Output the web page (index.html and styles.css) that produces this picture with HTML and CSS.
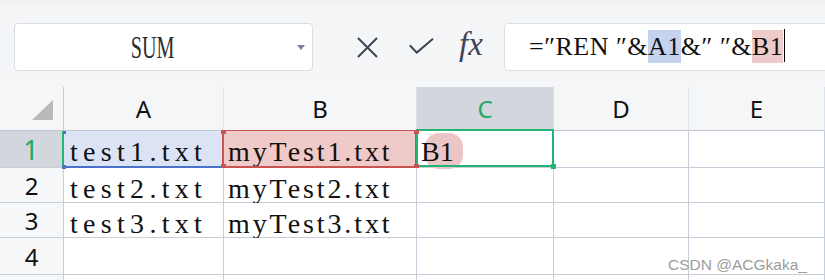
FILE: index.html
```html
<!DOCTYPE html>
<html>
<head>
<meta charset="utf-8">
<link rel="stylesheet" href="styles.css">
</head>
<body>
<div class="app">
  <div class="toolbar">
    <div class="namebox">
      <span class="name"><span class="name-t">SUM</span></span>
      <span class="dd"></span>
    </div>
    <span class="tb-icon ic-x">
      <svg width="21" height="21" viewBox="0 0 21 21"><path d="M1 1 L20 20 M20 1 L1 20" stroke="#3d4454" stroke-width="2" fill="none"/></svg>
    </span>
    <span class="tb-icon ic-ok">
      <svg width="25" height="16" viewBox="0 0 25 16"><path d="M0.8 7.2 L7.8 14.6 L24 0.8" stroke="#3d4454" stroke-width="2" fill="none"/></svg>
    </span>
    <span class="fx">fx</span>
    <div class="formula">=″REN ″&amp;<span class="ref ref-a">A1</span>&amp;″ ″&amp;<span class="ref ref-b">B1</span><span class="caret"></span></div>
  </div>

  <div class="sheet">
    <div class="c hd corner"><svg width="21" height="20" viewBox="0 0 21 20"><polygon points="21,0 21,20 0,20" fill="#b9b9b9"/></svg></div>
    <div class="c hd col">A</div>
    <div class="c hd col">B</div>
    <div class="c hd col col-on">C</div>
    <div class="c hd col">D</div>
    <div class="c hd col">E</div>

    <div class="c rh rh-on">1</div>
    <div class="c cell ta sel-a">test1.txt</div>
    <div class="c cell tb sel-b">myTest1.txt</div>
    <div class="c cell sel-c"><span class="pill">B1</span></div>
    <div class="c cell"></div>
    <div class="c cell"></div>

    <div class="c rh">2</div>
    <div class="c cell ta">test2.txt</div>
    <div class="c cell tb">myTest2.txt</div>
    <div class="c cell"></div>
    <div class="c cell"></div>
    <div class="c cell"></div>

    <div class="c rh">3</div>
    <div class="c cell ta">test3.txt</div>
    <div class="c cell tb">myTest3.txt</div>
    <div class="c cell"></div>
    <div class="c cell"></div>
    <div class="c cell"></div>

    <div class="c rh">4</div>
    <div class="c cell"></div>
    <div class="c cell"></div>
    <div class="c cell"></div>
    <div class="c cell"></div>
    <div class="c cell"></div>

    <div class="c rh"></div>
    <div class="c cell"></div>
    <div class="c cell"></div>
    <div class="c cell"></div>
    <div class="c cell"></div>
    <div class="c cell"></div>
  </div>

  <div class="wm">CSDN @ACGkaka_</div>
</div>
</body>
</html>
```
FILE: styles.css
```css
* { box-sizing: border-box; }
html, body { margin: 0; padding: 0; }
body { width: 825px; height: 280px; overflow: hidden; background: #fff; }

.app { position: relative; width: 825px; height: 280px; overflow: hidden; }

.toolbar {
  height: 87px;
  padding-top: 23px;
  display: flex;
  align-items: flex-start;
  background: linear-gradient(#eeeff1 0, #f4f5f7 5px, #f5f6f8 100%);
}

.namebox {
  margin-left: 14px;
  width: 299px;
  height: 48px;
  border: 1px solid #d9dce1;
  border-radius: 4px;
  background: #fff;
  display: flex;
}
.name {
  flex: 1;
  text-align: center;
  font-family: "Liberation Serif", serif;
  font-size: 32px;
  line-height: 46px;
  color: #2e2e2e;
}
.name-t { display: inline-block; transform: scaleX(0.63); }
.dd {
  width: 22px;
  display: flex;
  align-items: center;
  justify-content: center;
}
.dd::before {
  content: "";
  border-left: 4.5px solid transparent;
  border-right: 4.5px solid transparent;
  border-top: 5px solid #7b8295;
  margin-top: 1px;
}

.tb-icon { display: block; }
.tb-icon svg { display: block; }
.ic-x { margin-left: 44px; margin-top: 14px; }
.ic-ok { margin-left: 31px; margin-top: 15px; }
.fx {
  margin-left: 21px;
  width: 32px;
  text-align: center;
  font-family: "Liberation Serif", serif;
  font-style: italic;
  font-size: 33px;
  line-height: 48px;
  margin-top: -3px;
  color: #3d4454;
}

.formula {
  flex: 1;
  margin-left: 17px;
  margin-right: -6px;
  height: 48px;
  border: 1px solid #dcdfe4;
  border-radius: 4px;
  background: #fff;
  padding-left: 24px;
  font-family: "Liberation Serif", serif;
  font-size: 26px;
  line-height: 46px;
  letter-spacing: 0.5px;
  color: #111;
  white-space: nowrap;
}
.ref { padding: 2px 0; }
.ref-a { background: #c6d3ef; }
.ref-b { background: #eecaca; }
.caret {
  display: inline-block;
  width: 1px;
  height: 33px;
  background: #000;
  vertical-align: -7px;
  margin-left: 1px;
}

.sheet {
  height: 193px;
  overflow: hidden;
  display: grid;
  grid-template-columns: 64px 160px 193px 137px 135px 1fr;
  grid-template-rows: 44px 37px 35px 35px 37px 40px;
}
.c {
  border-right: 1px solid #c8cdd9;
  border-bottom: 1px solid #c8cdd9;
  background: #fff;
}
.hd {
  background: #f5f6f8;
  border-right-color: #dfe2e8;
  border-bottom-color: #bfc5d2;
  font-family: "Noto Sans", sans-serif;
  font-size: 24px;
  line-height: 43px;
  text-align: center;
  color: #111;
}
.corner {
  display: flex;
  justify-content: flex-end;
  align-items: flex-end;
  padding: 0 10px 10px 0;
  border-right-color: #c8cdd9;
}
.corner svg { display: block; }
.col-on { background: #d3d6dd; color: #22a867; }

.rh {
  background: #f6f7f9;
  font-family: "Noto Sans", sans-serif;
  font-size: 24px;
  text-align: center;
  color: #111;
  display: flex;
  align-items: center;
  justify-content: center;
}
.rh-on {
  background: #d3d6dd;
  color: #22a867;
  font-size: 27px;
  border-right: 2px solid #22b573;
}

.cell {
  font-family: "Liberation Serif", "Times New Roman", serif;
  font-size: 28px;
  line-height: 28px;
  padding: 7px 0 0 5px;
  color: #111;
  white-space: nowrap;
}
.ta { letter-spacing: 5.3px; padding-left: 6px; }
.tb { letter-spacing: 2.9px; padding-left: 4px; }

.sel-a {
  position: relative;
  background: #dce3f5;
  border-bottom-color: #4a73c8;
  box-shadow: inset 0 -1px 0 #4a73c8;
}
.sel-a::before {
  content: "";
  position: absolute;
  left: -2px;
  bottom: -2px;
  width: 4px;
  height: 4px;
  background: #4a73c8;
}
.sel-a::after {
  content: "";
  position: absolute;
  left: -1px;
  top: 0;
  width: 3px;
  height: 3px;
  background: #4a73c8;
}

.sel-b { position: relative; background: #f0c9c9; }
.sel-b::after {
  content: "";
  position: absolute;
  left: -2px;
  right: -1px;
  top: -1px;
  bottom: -1px;
  border: 2px solid #c9534f;
  border-top-width: 1px;
}
.sel-b::before {
  content: "";
  position: absolute;
  left: -3px;
  top: -1px;
  width: 5px;
  height: 4px;
  background: #c9534f;
  box-shadow: 193px 0 0 #c9534f, 0 34px 0 #c9534f, 193px 34px 0 #c9534f;
  z-index: 1;
}

.sel-c { position: relative; padding-left: 4px; }
.sel-c::after {
  content: "";
  position: absolute;
  left: -1px;
  right: -1px;
  top: -2px;
  bottom: 0;
  border: 2px solid #22b573;
}
.sel-c::before {
  content: "";
  position: absolute;
  right: -3px;
  bottom: -2px;
  width: 5px;
  height: 5px;
  background: #22b573;
  z-index: 1;
}
.pill { position: relative; z-index: 0; }
.pill::before {
  content: "";
  position: absolute;
  left: 4px;
  right: -9px;
  top: -3px;
  bottom: -2px;
  border-radius: 14px;
  background: #ecc6c6;
  z-index: -1;
}

.wm {
  position: absolute;
  left: 668px;
  top: 256px;
  font-family: "Liberation Sans", sans-serif;
  font-size: 15.5px;
  color: #9c9c9c;
  white-space: nowrap;
}
```
